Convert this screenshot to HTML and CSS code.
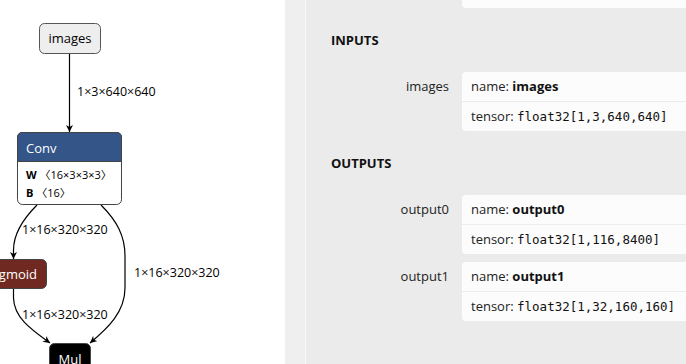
FILE: index.html
```html
<!DOCTYPE html>
<html lang="en">
<head>
    <meta charset="UTF-8">
    <meta name="viewport" content="width=device-width, initial-scale=1.0">
    <title>Model Graph</title>
    <link rel="stylesheet" href="styles.css">
</head>
<body>
    <div class="app">
        <!-- Graph canvas -->
        <div class="graph">
            <svg class="graph-svg" width="285" height="364" viewBox="0 0 285 364">
                <defs>
                    <marker id="arrow" viewBox="0 0 10 10" refX="10" refY="5" markerWidth="7" markerHeight="7" orient="auto" markerUnits="userSpaceOnUse">
                        <path d="M 0 0 L 10 5 L 0 10 L 3 5 z" fill="#000"></path>
                    </marker>
                </defs>

                <!-- edges -->
                <path class="edge" d="M 69.5 53.5 L 69.5 132" marker-end="url(#arrow)"></path>
                <path class="edge" d="M 37 205 C 22 220 13.5 236 13.5 250 L 13.5 259" marker-end="url(#arrow)"></path>
                <path class="edge" d="M 101 205 C 117 221 125 236 125 256 L 125 288 C 125 312 108 328 90 343" marker-end="url(#arrow)"></path>
                <path class="edge" d="M 13.5 289 L 13.5 298 C 14 318 32 330 50 343" marker-end="url(#arrow)"></path>

                <text class="edge-label" x="77" y="96">1×3×640×640</text>
                <text class="edge-label" x="22" y="234">1×16×320×320</text>
                <text class="edge-label" x="134" y="277">1×16×320×320</text>
                <text class="edge-label" x="22" y="319">1×16×320×320</text>

                <!-- input node -->
                <rect class="node-input" x="39.5" y="23.5" width="61" height="30" rx="5"></rect>
                <text class="node-text" x="70" y="43" text-anchor="middle">images</text>

                <!-- Conv node -->
                <rect class="node-body" x="17.5" y="132.5" width="104" height="72" rx="5"></rect>
                <path class="node-conv" d="M 17.5 161.5 L 17.5 137.5 Q 17.5 132.5 22.5 132.5 L 116.5 132.5 Q 121.5 132.5 121.5 137.5 L 121.5 161.5 Z"></path>
                <text class="node-title" x="26" y="153">Conv</text>
                <text class="node-attr" x="26" y="179"><tspan class="attr-key">W</tspan> 〈16×3×3×3〉</text>
                <text class="node-attr" x="26" y="197"><tspan class="attr-key">B</tspan> 〈16〉</text>

                <!-- Sigmoid node -->
                <rect class="node-sigmoid" x="-26.5" y="259.5" width="73" height="29" rx="5"></rect>
                <text class="node-title" x="37" y="279" text-anchor="end">Sigmoid</text>

                <!-- Mul node -->
                <rect class="node-mul" x="49.5" y="343.5" width="41" height="30" rx="5"></rect>
                <text class="node-title" x="70" y="364" text-anchor="middle">Mul</text>
            </svg>
        </div>

        <!-- Properties sidebar -->
        <aside class="sidebar">
            <div class="sidebar-gutter"></div>
            <div class="sidebar-content">
                <div class="item">
                    <div class="item-name"></div>
                    <div class="card card-cut"></div>
                </div>

                <h2 class="section-title">INPUTS</h2>
                <div class="item">
                    <div class="item-name">images</div>
                    <div class="card">
                        <div class="card-row">name: <b>images</b></div>
                        <div class="card-row">tensor: <code>float32[1,3,640,640]</code></div>
                    </div>
                </div>

                <h2 class="section-title">OUTPUTS</h2>
                <div class="item">
                    <div class="item-name">output0</div>
                    <div class="card">
                        <div class="card-row">name: <b>output0</b></div>
                        <div class="card-row">tensor: <code>float32[1,116,8400]</code></div>
                    </div>
                </div>
                <div class="item">
                    <div class="item-name">output1</div>
                    <div class="card">
                        <div class="card-row">name: <b>output1</b></div>
                        <div class="card-row">tensor: <code>float32[1,32,160,160]</code></div>
                    </div>
                </div>
            </div>
        </aside>
    </div>
</body>
</html>
```

FILE: styles.css
```css
body {
    margin: 0;
    font-family: "Open Sans", "Noto Sans", sans-serif;
    background-color: #ffffff;
    overflow: hidden;
}
.app {
    display: flex;
    height: 364px;
}

/* graph */
.graph {
    flex: none;
    width: 285px;
    height: 364px;
    overflow: hidden;
}
.graph-svg {
    display: block;
}
.edge {
    fill: none;
    stroke: #000;
    stroke-width: 1.2;
}
.edge-label {
    font-size: 12.5px;
    fill: #000;
}
.node-input {
    fill: #eeeeee;
    stroke: #555;
    stroke-width: 1;
}
.node-body {
    fill: #ffffff;
    stroke: #444;
    stroke-width: 1;
}
.node-conv {
    fill: #335588;
    stroke: #444;
    stroke-width: 1;
}
.node-sigmoid {
    fill: #702921;
    stroke: #444;
    stroke-width: 1;
}
.node-mul {
    fill: #000;
    stroke: #444;
    stroke-width: 1;
}
.node-text {
    font-size: 13px;
    fill: #000;
}
.node-title {
    font-size: 13px;
    fill: #fff;
}
.node-attr {
    font-family: "Open Sans", "Noto Sans CJK JP", sans-serif;
    font-size: 11px;
    fill: #000;
}
.attr-key {
    font-weight: bold;
}

/* sidebar */
.sidebar {
    flex: none;
    width: 520px;
    display: flex;
    background-color: #efefef;
}
.sidebar-gutter {
    width: 20px;
    border-right: 1px solid #f7f7f7;
}
.sidebar-content {
    flex: 1;
    background-color: #ebebeb;
    padding-left: 25px;
    padding-right: 20px;
}
.section-title {
    margin: 22px 0;
    height: 20px;
    line-height: 20px;
    font-size: 13px;
    font-weight: bold;
    color: #111;
}
.item {
    display: grid;
    grid-template-columns: 118px 1fr;
    column-gap: 13px;
    margin-bottom: 8px;
}
.item-name {
    text-align: right;
    font-size: 13px;
    line-height: 29px;
    color: #222;
}
.card {
    background-color: #fcfcfc;
    border-radius: 4px;
}
.card-cut {
    height: 8px;
    border-radius: 0 0 4px 4px;
}
.item:first-child {
    margin-bottom: 0;
}
.card-row {
    height: 29px;
    line-height: 29px;
    padding-left: 9px;
    font-size: 13px;
    color: #222;
}
.card-row + .card-row {
    border-top: 1px solid #ececec;
}
.card-row b {
    color: #111;
}
.card-row code {
    font-family: "DejaVu Sans Mono", monospace;
    font-size: 12.5px;
    color: #111;
}
```
